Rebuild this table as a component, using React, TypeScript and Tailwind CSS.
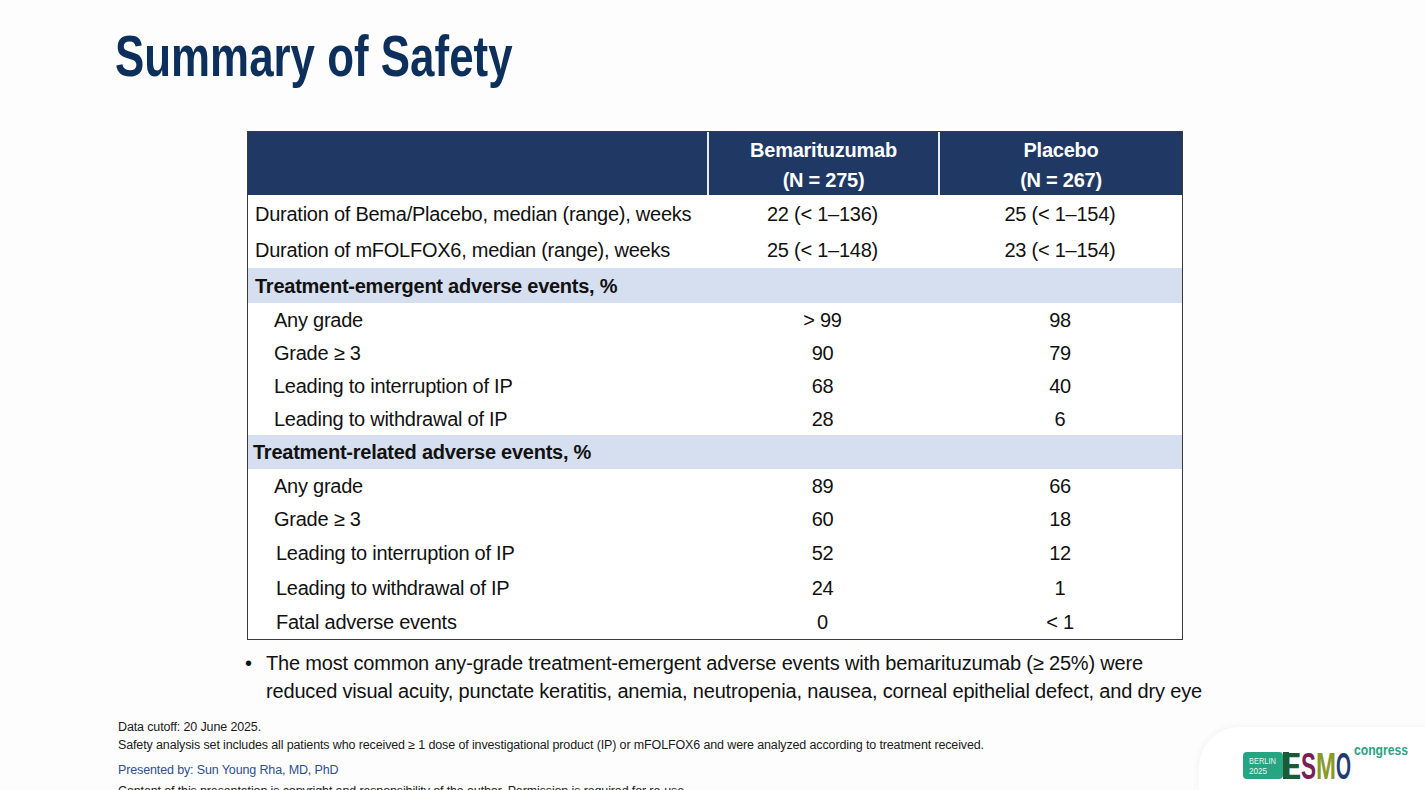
const sans = { fontFamily: "'Liberation Sans', Arial, sans-serif" };

type Row = { label: string; a: string; b: string; pad: string; section?: boolean; h: string };

const rows: Row[] = [
  { label: "Duration of Bema/Placebo, median (range), weeks", a: "22 (< 1–136)", b: "25 (< 1–154)", pad: "pl-[7px]", h: "h-[37px]" },
  { label: "Duration of mFOLFOX6, median (range), weeks", a: "25 (< 1–148)", b: "23 (< 1–154)", pad: "pl-[7px]", h: "h-[36px]" },
  { label: "Treatment-emergent adverse events, %", a: "", b: "", pad: "pl-[7px]", section: true, h: "h-[35px]" },
  { label: "Any grade", a: "> 99", b: "98", pad: "pl-[26px]", h: "h-[33px]" },
  { label: "Grade ≥ 3", a: "90", b: "79", pad: "pl-[26px]", h: "h-[33px]" },
  { label: "Leading to interruption of IP", a: "68", b: "40", pad: "pl-[26px]", h: "h-[33px]" },
  { label: "Leading to withdrawal of IP", a: "28", b: "6", pad: "pl-[26px]", h: "h-[33px]" },
  { label: "Treatment-related adverse events, %", a: "", b: "", pad: "pl-[5px]", section: true, h: "h-[34px]" },
  { label: "Any grade", a: "89", b: "66", pad: "pl-[26px]", h: "h-[33px]" },
  { label: "Grade ≥ 3", a: "60", b: "18", pad: "pl-[26px]", h: "h-[33px]" },
  { label: "Leading to interruption of IP", a: "52", b: "12", pad: "pl-[28px]", h: "h-[35px]" },
  { label: "Leading to withdrawal of IP", a: "24", b: "1", pad: "pl-[28px]", h: "h-[35px]" },
  { label: "Fatal adverse events", a: "0", b: "< 1", pad: "pl-[28px]", h: "h-[34px]" },
];

const SafetyTable = () => {
  return (
    <div className="ml-[247px] w-[936px] border border-[#3a3a3a] text-[20px] tracking-[-0.25px] text-[#111]">
      <div className="flex h-[63px] bg-[#1f3864] font-bold leading-[30px] text-white">
        <div className="w-[459px]" />
        <div className="flex w-[231px] flex-col items-center justify-center border-l-2 border-[#e8ecf4] pt-[2px]">
          <span>Bemarituzumab</span>
          <span>(N = 275)</span>
        </div>
        <div className="flex flex-1 flex-col items-center justify-center border-l-2 border-[#e8ecf4] pt-[2px]">
          <span>Placebo</span>
          <span>(N = 267)</span>
        </div>
      </div>
      {rows.map((r, i) => (
        <div key={i} className={`flex items-center ${r.h} ${r.section ? "bg-[#d5dff0] font-bold" : "bg-white"}`}>
          <div className={`w-[459px] whitespace-nowrap ${r.pad}`}>{r.label}</div>
          <div className="w-[231px] text-center">{r.a}</div>
          <div className="flex-1 text-center">{r.b}</div>
        </div>
      ))}
    </div>
  );
};

// ESMO congress logo, letters squeezed to the logo's condensed shape
const EsmoLogo = () => {
  return (
    <svg width="180" height="42" viewBox="0 0 180 42" className="absolute left-[1236px] top-[742px]">
      <rect x="7" y="10" width="40" height="27" rx="4" fill="#27a482" />
      <text x="13" y="22" fontSize="9.5" fill="#e8f7f0" textLength="27" lengthAdjust="spacingAndGlyphs" fontFamily="Liberation Sans, Arial, sans-serif">BERLIN</text>
      <text x="13" y="32" fontSize="9.5" fill="#e8f7f0" textLength="18" lengthAdjust="spacingAndGlyphs" fontFamily="Liberation Sans, Arial, sans-serif">2025</text>
      <rect x="47" y="10" width="6" height="27" fill="#1c5a36" />
      <g fontSize="37.5" fontWeight="bold" fontFamily="Liberation Sans, Arial, sans-serif">
        <text x="48" y="37" fill="#1c5a36" textLength="17" lengthAdjust="spacingAndGlyphs">E</text>
        <text x="65" y="37" fill="#7c1d5a" textLength="15" lengthAdjust="spacingAndGlyphs">S</text>
        <text x="80" y="37" fill="#889a2a" textLength="20" lengthAdjust="spacingAndGlyphs">M</text>
        <text x="100" y="37" fill="#1e3c6d" textLength="15" lengthAdjust="spacingAndGlyphs">O</text>
      </g>
      <text x="118" y="13" fontSize="15" fontWeight="bold" fill="#27a482" textLength="54" lengthAdjust="spacingAndGlyphs" fontFamily="Liberation Sans, Arial, sans-serif">congress</text>
    </svg>
  );
};

export default function App() {
  return (
    <div className="relative h-[790px] w-[1425px] overflow-hidden bg-[#fcfdfc]" style={sans}>
      <h1 className="pl-[115px] pt-[24px] text-[57px] font-bold leading-[64px] text-[#0c2f5c]">
        <span className="inline-block origin-left scale-x-[0.77]">Summary of Safety</span>
      </h1>
      <div className="mt-[43px]">
        <SafetyTable />
      </div>
      <div className="ml-[245px] mt-[9px] flex text-[20px] leading-[28px] tracking-[-0.17px] text-[#111]">
        <span className="w-[21px]">•</span>
        <p className="whitespace-nowrap">
          The most common any-grade treatment-emergent adverse events with bemarituzumab (≥ 25%) were
          <br />
          reduced visual acuity, punctate keratitis, anemia, neutropenia, nausea, corneal epithelial defect, and dry eye
        </p>
      </div>
      <div className="ml-[118px] mt-[13px] text-[12.5px] leading-[18px] tracking-[-0.13px] text-[#1a1a1a]">
        <p>Data cutoff: 20 June 2025.</p>
        <p>Safety analysis set includes all patients who received ≥ 1 dose of investigational product (IP) or mFOLFOX6 and were analyzed according to treatment received.</p>
        <p className="mt-[7px] text-[12.5px] text-[#2d4f8e]">Presented by: Sun Young Rha, MD, PhD</p>
        <p className="mt-[3px]">Content of this presentation is copyright and responsibility of the author. Permission is required for re-use.</p>
      </div>
      <div className="absolute left-[1199px] top-[727px] h-[90px] w-[240px] rounded-tl-[40px] bg-white shadow-[0_0_8px_rgba(0,0,0,0.06)]" />
      <EsmoLogo />
    </div>
  );
}
